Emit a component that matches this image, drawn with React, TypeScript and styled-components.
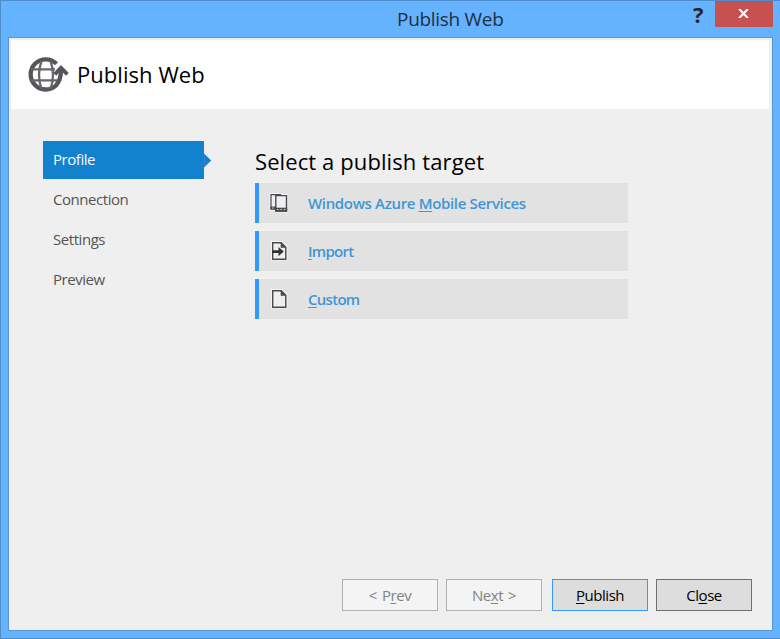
import React from "react";
import styled, { createGlobalStyle } from "styled-components";

const GlobalStyle = createGlobalStyle`
  html, body { margin: 0; padding: 0; overflow: hidden; }
  *, *::before, *::after { box-sizing: border-box; }
  button { font: inherit; letter-spacing: inherit; }
`;

const WindowFrame = styled.div`
  width: 780px;
  height: 639px;
  display: flex;
  flex-direction: column;
  background: #65b2fe;
  border: solid #4c8dcb;
  border-width: 1px 0 1px 1px;
  font-family: "Open Sans", "Noto Sans", sans-serif;
  font-size: 15px;
  letter-spacing: -0.45px;
`;

const TitleBar = styled.header`
  height: 36px;
  flex: none;
  display: flex;
  align-items: flex-start;
  padding: 0 7px 0 396px;
`;

const WindowTitle = styled.h1`
  margin: 0;
  flex: 1;
  font-size: 19px;
  font-weight: 400;
  line-height: 36px;
  letter-spacing: -0.3px;
  color: #1f3040;
`;

const HelpButton = styled.button`
  width: 34px;
  height: 26px;
  padding: 0;
  border: 0;
  background: none;
  color: #262626;
  && {
    font-size: 22px;
    font-weight: 700;
    line-height: 23px;
  }
`;

const CloseButton = styled.button`
  width: 58px;
  height: 26px;
  display: flex;
  justify-content: center;
  align-items: flex-start;
  padding: 8px 1px 0 0;
  border: 0;
  background: #c75050;
`;

const Client = styled.main`
  flex: none;
  width: 765px;
  height: 594px;
  margin-left: 7px;
  display: flex;
  flex-direction: column;
  background: #efefef;
  border: 1px solid #5598d9;
`;

const Banner = styled.div`
  height: 69px;
  flex: none;
  margin: 2px 3px 0 2px;
  padding-left: 16px;
  display: flex;
  align-items: center;
  gap: 8px;
  background: #fff;
`;

const BannerTitle = styled.h2`
  margin: 0;
  padding-bottom: 2px;
  font-size: 22px;
  font-weight: 400;
  line-height: 30px;
  letter-spacing: 0.05px;
  color: #000;
`;

const Body = styled.div`
  flex: 1;
  display: flex;
  gap: 51px;
  padding: 32px 0 0 34px;
`;

const Nav = styled.nav`
  width: 161px;
  display: flex;
  flex-direction: column;
  gap: 2px;
`;

const NavItem = styled.div<{ $active?: boolean }>`
  position: relative;
  height: 38px;
  padding-left: 10px;
  line-height: 36px;
  color: ${(p) => (p.$active ? "#f4faff" : "#555")};
  background: ${(p) => (p.$active ? "#1382ce" : "transparent")};
`;

const Pointer = styled.svg`
  position: absolute;
  left: 100%;
  top: 12px;
`;

const Content = styled.section`
  width: 373px;
`;

const Heading = styled.h3`
  margin: 0;
  height: 42px;
  font-size: 22px;
  font-weight: 400;
  line-height: 40px;
  letter-spacing: 0.1px;
  white-space: nowrap;
  color: #000;
`;

const Targets = styled.div`
  display: flex;
  flex-direction: column;
  gap: 8px;
`;

const Target = styled.div<{ $tight?: boolean }>`
  height: 40px;
  display: flex;
  align-items: center;
  gap: 19px;
  padding-left: 10px;
  border-left: 4px solid #3399ff;
  background: #e2e2e2;
  color: #3f96d6;
  font-weight: 600;
  letter-spacing: ${(p) => (p.$tight ? "-0.72px" : "-0.34px")};
  svg { flex: none; }
`;

const Footer = styled.footer`
  height: 51px;
  flex: none;
  display: flex;
  justify-content: flex-end;
  padding-right: 20px;
`;

const ActionButton = styled.button<{ $kind?: "primary" | "disabled" }>`
  width: 96px;
  height: 32px;
  padding: 0;
  margin-left: ${(p) => (p.$kind === "primary" ? 10 : 8)}px;
  line-height: 30px;
  word-spacing: 1.5px;
  border: 1px solid
    ${(p) => (p.$kind === "primary" ? "#3399ff" : p.$kind === "disabled" ? "#adb2b5" : "#707070")};
  background: ${(p) => (p.$kind === "disabled" ? "#f4f4f4" : "#dddddd")};
  color: ${(p) => (p.$kind === "disabled" ? "#838383" : "#000")};
`;

const Key = styled.span`
  text-decoration: underline;
  text-decoration-thickness: 1px;
  text-underline-offset: 2px;
  text-decoration-skip-ink: none;
`;

const GlobeIcon = () => (
  <svg width="42" height="36" viewBox="0 0 42 36" fill="none" stroke="#55565a">
    <path d="M29.5 6.8A15.1 15.1 0 1 0 29 28.5C32.5 24.5 34 20 34 13" strokeWidth="4.3" />
    <path d="M14.5 4Q9.5 18 14.5 32M23.5 4Q28.5 18 23.5 32M4 12.3H28M4 23.3H30" strokeWidth="2.3" stroke="#66676a" />
    <path d="M27.8 17.3L34 10.8L40.4 17.3" strokeWidth="3.9" />
  </svg>
);

const DevicesIcon = () => (
  <svg width="20" height="20" viewBox="0 0 20 20">
    <path d="M0.5 0H13V1H19V19.5H6V18H0.5Z" fill="#f3f3f3" />
    <path d="M2 1.7H11.5V16H2Z" fill="#efeff2" stroke="#4a4a4d" strokeWidth="1.2" />
    <path d="M1.4 13.5H7V16.6H1.4Z" fill="#4a4a4d" />
    <path d="M3 15H4.5" stroke="#d8d8d8" />
    <path d="M6.8 2.6H17.5V18H6.8Z" fill="#efeff2" stroke="#4a4a4d" strokeWidth="1.4" />
    <path d="M6.1 14.7H18.2V18.6H6.1Z" fill="#4a4a4d" />
    <path d="M8 16.5H9.5M11.4 16.5H12.9M14.8 16.5H16.3" stroke="#d8d8d8" />
  </svg>
);

const FileIcon = ({ arrow }: { arrow?: boolean }) => (
  <svg width="20" height="20" viewBox="0 0 20 20">
    <path d="M2 0H13.5L18.5 5V19.5H2Z" fill="#f3f3f3" />
    <path d="M3.7 1.7H12.3L16.8 6.2V18.3H3.7Z" fill="#efeff2" stroke="#4a4a4d" strokeWidth="1.4" />
    <path d="M11.7 1.5V6.7H17L12.3 1.5Z" fill="#4a4a4d" />
    {arrow && <path d="M3 9.2H9.5V6L14.8 10.6L9.5 15.2V12H3Z" fill="#333" />}
  </svg>
);

export default function App() {
  return (
    <>
      <GlobalStyle />
      <WindowFrame>
        <TitleBar>
          <WindowTitle>Publish Web</WindowTitle>
          <HelpButton aria-label="Help">?</HelpButton>
          <CloseButton aria-label="Close window">
            <svg width="11" height="9" viewBox="0 0 11 9">
              <path d="M1.2 0L9.8 9M9.8 0L1.2 9" stroke="#fff" strokeWidth="2.1" />
            </svg>
          </CloseButton>
        </TitleBar>
        <Client>
          <Banner>
            <GlobeIcon />
            <BannerTitle>Publish Web</BannerTitle>
          </Banner>
          <Body>
            <Nav>
              <NavItem $active>
                Profile
                <Pointer width="8" height="15" viewBox="0 0 8 15">
                  <path d="M0 0.5L7.2 7.5L0 14.5Z" fill="#1382ce" />
                  <path d="M0.5 1V14" stroke="#447cc4" />
                </Pointer>
              </NavItem>
              <NavItem>Connection</NavItem>
              <NavItem>Settings</NavItem>
              <NavItem>Preview</NavItem>
            </Nav>
            <Content>
              <Heading>Select a publish target</Heading>
              <Targets>
                <Target>
                  <DevicesIcon />
                  <span>Windows Azure <Key>M</Key>obile Services</span>
                </Target>
                <Target $tight>
                  <FileIcon arrow />
                  <span><Key>I</Key>mport</span>
                </Target>
                <Target $tight>
                  <FileIcon />
                  <span><Key>C</Key>ustom</span>
                </Target>
              </Targets>
            </Content>
          </Body>
          <Footer>
            <ActionButton $kind="disabled">&lt; P<Key>r</Key>ev</ActionButton>
            <ActionButton $kind="disabled">Ne<Key>x</Key>t &gt;</ActionButton>
            <ActionButton $kind="primary"><Key>P</Key>ublish</ActionButton>
            <ActionButton>Cl<Key>o</Key>se</ActionButton>
          </Footer>
        </Client>
      </WindowFrame>
    </>
  );
}
